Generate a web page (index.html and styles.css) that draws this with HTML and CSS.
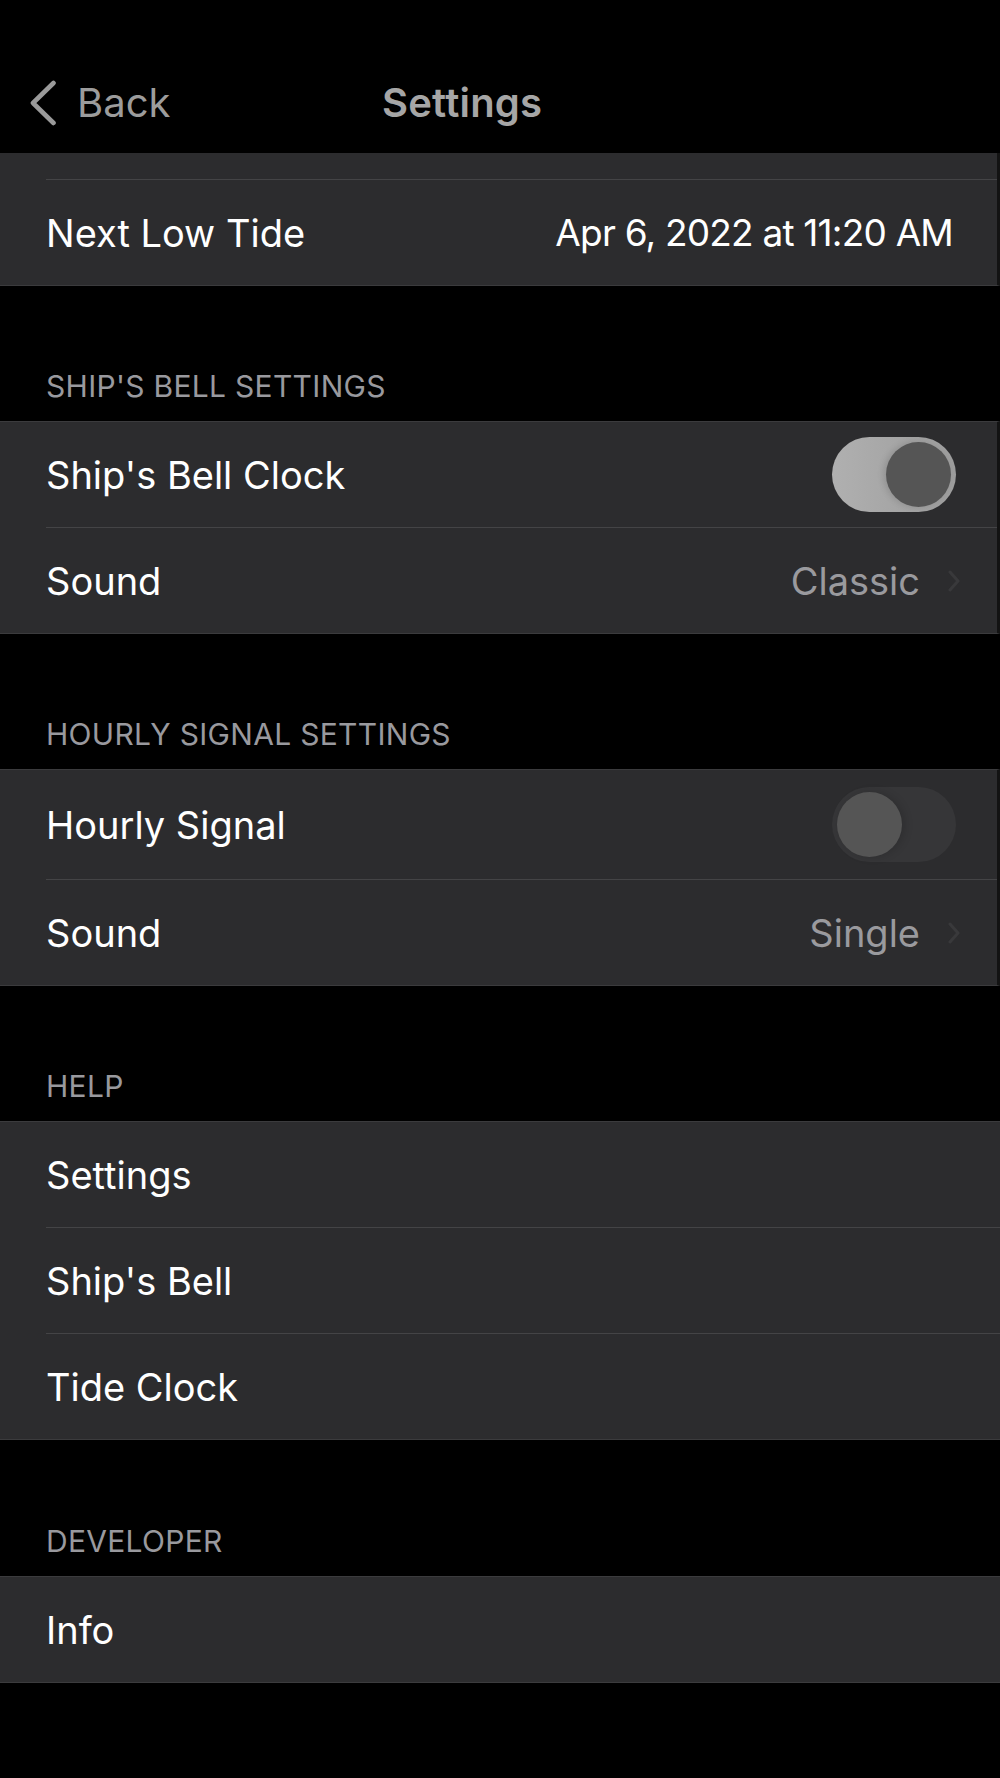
FILE: index.html
```html
<!DOCTYPE html>
<html lang="en">
<head>
<meta charset="utf-8">
<title>Settings</title>
<link rel="stylesheet" href="styles.css">
</head>
<body>
<div class="screen">
  <header class="nav">
    <div class="nav-left">
      <svg class="back-chevron" width="26" height="46" viewBox="0 0 26 46" aria-hidden="true">
        <polyline points="23.5,3 3,23 23.5,43" fill="none" stroke="#9a9a9a" stroke-width="4.6" stroke-linecap="round" stroke-linejoin="round"/>
      </svg>
      <span class="back-label">Back</span>
    </div>
    <h1 class="nav-title">Settings</h1>
  </header>

  <section class="group group-clipped group-first">
    <div class="row-stub"></div>
    <div class="row">
      <span class="label">Next Low Tide</span>
      <span class="value value-date">Apr 6, 2022 at 11:20 AM</span>
    </div>
  </section>

  <div class="section-header">SHIP'S BELL SETTINGS</div>
  <section class="group group-clipped">
    <div class="row">
      <span class="label">Ship's Bell Clock</span>
      <span class="toggle toggle-on"><span class="knob"></span></span>
    </div>
    <div class="row">
      <span class="label">Sound</span>
      <span class="detail">
        <span class="value">Classic</span>
        <svg class="chevron" width="12" height="22" viewBox="0 0 12 22" aria-hidden="true">
          <polyline points="2,2 10,11 2,20" fill="none" stroke="#39393b" stroke-width="3" stroke-linecap="round" stroke-linejoin="round"/>
        </svg>
      </span>
    </div>
  </section>

  <div class="section-header">HOURLY SIGNAL SETTINGS</div>
  <section class="group group-clipped">
    <div class="row row-tall">
      <span class="label">Hourly Signal</span>
      <span class="toggle toggle-off"><span class="knob"></span></span>
    </div>
    <div class="row">
      <span class="label">Sound</span>
      <span class="detail">
        <span class="value">Single</span>
        <svg class="chevron" width="12" height="22" viewBox="0 0 12 22" aria-hidden="true">
          <polyline points="2,2 10,11 2,20" fill="none" stroke="#39393b" stroke-width="3" stroke-linecap="round" stroke-linejoin="round"/>
        </svg>
      </span>
    </div>
  </section>

  <div class="section-header">HELP</div>
  <section class="group">
    <div class="row"><span class="label">Settings</span></div>
    <div class="row"><span class="label">Ship's Bell</span></div>
    <div class="row"><span class="label">Tide Clock</span></div>
  </section>

  <div class="section-header section-header-last">DEVELOPER</div>
  <section class="group">
    <div class="row"><span class="label">Info</span></div>
  </section>
</div>
</body>
</html>
```

FILE: styles.css
```css
* {
  box-sizing: border-box;
}

html, body {
  margin: 0;
  padding: 0;
  background: #000;
}

body {
  font-family: Inter, "Noto Sans", "Liberation Sans", sans-serif;
  color: #fff;
  -webkit-font-smoothing: antialiased;
}

.screen {
  width: 1000px;
  min-height: 1778px;
  background: #000;
}

/* Navigation bar */
.nav {
  height: 153px;
  padding-top: 52px;
  display: flex;
  align-items: center;
}

.nav-left {
  width: 382px;
  display: flex;
  align-items: center;
  padding-left: 30px;
}

.back-chevron {
  display: block;
  margin-top: 0;
}

.back-label {
  margin-left: 21px;
  font-size: 40px;
  color: #9c9c9c;
}

.nav-title {
  margin: 0;
  font-size: 40px;
  font-weight: 600;
  color: #a6a6a6;
  letter-spacing: 0.2px;
}

/* Groups */
.group {
  background: #2c2c2e;
  border-top: 1px solid #3b3b3d;
  border-bottom: 1px solid #3b3b3d;
}

.group-clipped {
  border-right: 3px solid #131313;
}

.group-first {
  border-top: none;
}

.row-stub {
  height: 26px;
}

.row {
  box-sizing: content-box;
  height: 105px;
  display: flex;
  align-items: center;
  justify-content: space-between;
  padding: 0 41px 0 46px;
  position: relative;
}

.row-tall {
  height: 109px;
}

.row + .row,
.row-stub + .row {
  border-top: 1px solid transparent;
}

.row + .row::before,
.row-stub + .row::before {
  content: "";
  position: absolute;
  top: -1px;
  left: 46px;
  right: 0;
  height: 1px;
  background: #444446;
}

.label {
  font-size: 38px;
  color: #fff;
}

.value {
  font-size: 38px;
  color: #9a9a9e;
}

.value-date {
  font-size: 37px;
  letter-spacing: -0.8px;
  color: #fff;
  margin-right: 3px;
}

.detail {
  display: flex;
  align-items: center;
  gap: 28px;
  margin-right: -4px;
}

.chevron {
  display: block;
}

/* Section headers */
.section-header {
  height: 135px;
  display: flex;
  align-items: flex-end;
  padding: 0 46px 17px;
  font-size: 30px;
  line-height: 36px;
  color: #99999e;
  letter-spacing: 0.3px;
}

.section-header-last {
  height: 136px;
}

/* Toggles */
.toggle {
  width: 124px;
  height: 75px;
  border-radius: 38px;
  position: relative;
  display: block;
}

.toggle-on {
  background: linear-gradient(90deg, #b0b0b0 0%, #a6a6a6 50%, #9c9c9c 100%);
}

.toggle-off {
  background: #363638;
}

.knob {
  position: absolute;
  top: 5px;
  width: 65px;
  height: 65px;
  border-radius: 50%;
  background: #555555;
}

.toggle-on .knob {
  right: 5px;
  box-shadow: -3px 0 6px rgba(0, 0, 0, 0.12);
}

.toggle-off .knob {
  left: 5px;
  box-shadow: 3px 0 8px rgba(0, 0, 0, 0.15);
}
```
